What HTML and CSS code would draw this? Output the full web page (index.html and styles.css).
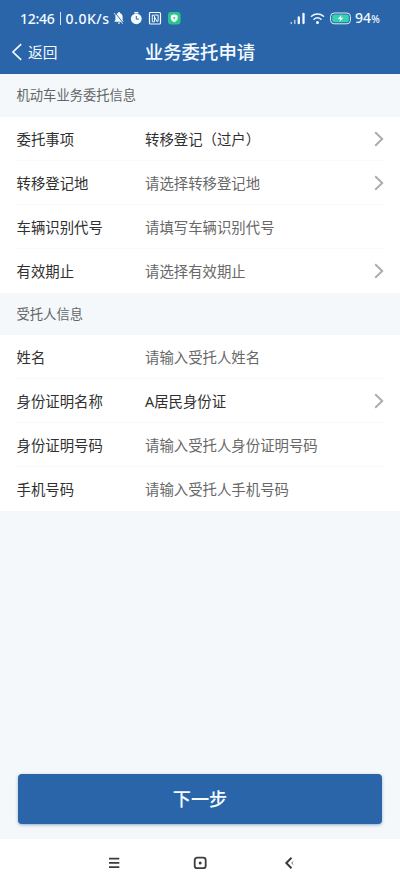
FILE: index.html
```html
<!DOCTYPE html>
<html lang="zh-CN">
<head>
<meta charset="utf-8">
<title>业务委托申请</title>
<link rel="stylesheet" href="styles.css">
</head>
<body>
<div class="app">
  <header class="header">
    <div class="status">
      <span class="clock">12:46<i class="bar"></i><span class="speed">0.0K/s</span></span>
      <svg class="st-left" width="68" height="16" viewBox="0 0 68 16" fill="none">
        <path d="M1.300 11.700h9.400L9.600 10V6.500C9.600 4.600 8.300 3.300 6.800 2.900V2H5.200v.9C3.700 3.300 2.400 4.600 2.400 6.500V10zM4.800 12.500h2.400a1.200 1.200 0 0 1-2.400 0z" fill="#f4fbff"/>
        <path d="M1.800 2.500l8.800 11" stroke="#2b65a9" stroke-width="1"/>
        <path d="M1 3l8.700 10.800" stroke="#f4fbff" stroke-width=".8"/>
        <circle cx="23.300" cy="8.800" r="5.400" fill="#f4fbff"/>
        <path d="M21.300 2.700h4" stroke="#f4fbff" stroke-width="1.500"/>
        <path d="M23.300 6v3.100h2.600" stroke="#2b65a9" stroke-width="1"/>
        <rect x="36.500" y="2.500" width="11" height="11.500" rx="1" stroke="#f4fbff" stroke-width="1.200"/>
        <path d="M39.300 11.800V5h1.400l3 6.200M41.500 5h3.600v6.300h-1.600M41.500 7v4.800h-2.200" stroke="#f4fbff" stroke-width="1"/>
        <rect x="55" y="2" width="12.500" height="12.500" rx="3" fill="#2bc58c"/>
        <path d="M61.200 4.300l3.400 1.200v2.800c0 1.800-1.300 3-3.400 4-2.100-1-3.400-2.200-3.400-4V5.500z" fill="#f4fff9"/>
        <path d="M61.200 6.800l1.200 1.100-1.200 1.400L60 7.900z" fill="#2bc58c"/>
      </svg>
      <svg class="st-right" width="64" height="16" viewBox="0 0 64 16" fill="none">
        <path d="M1.300 12.500v1M4.800 10.500v3" stroke="#c3daf0" stroke-width="1.300" stroke-linecap="round"/>
        <path d="M8.800 7.500v5.700M13.500 4v9" stroke="#f4fbff" stroke-width="2.300" stroke-linecap="round"/>
        <path d="M21.500 6.300a9 9 0 0 1 12 0M24 9.300a5.400 5.400 0 0 1 7 0" stroke="#f4fbff" stroke-width="1.500" stroke-linecap="round"/>
        <circle cx="27.500" cy="12.400" r="1.500" fill="#f4fbff"/>
        <rect x="40.600" y="3" width="19.800" height="10.800" rx="3.500" stroke="#d8f2f3" stroke-width="1"/>
        <rect x="42.200" y="4.600" width="16.600" height="7.600" rx="2" fill="#36d3b0"/>
        <path d="M51.500 5l-3.700 3.900h2.500l-.8 3 3.800-4.100h-2.500z" fill="#fff"/>
      </svg>
      <span class="level">94<small>%</small></span>
    </div>
    <div class="titlebar">
      <a class="back"><svg width="12" height="18" viewBox="0 0 12 18" fill="none"><path d="M10.200 1.200L2 9l8.200 7.800" stroke="#f4fbff" stroke-width="1.700"/></svg>返回</a>
      <h1>业务委托申请</h1>
    </div>
  </header>
  <main class="content">
    <h2 class="first">机动车业务委托信息</h2>
    <section class="list">
      <div class="row"><label>委托事项</label><span class="value">转移登记（过户）</span><svg class="arrow" viewBox="0 0 10 16"><path d="M1.200 1.200L8.200 8l-7 6.800"/></svg></div>
      <div class="row"><label>转移登记地</label><span class="hint">请选择转移登记地</span><svg class="arrow" viewBox="0 0 10 16"><path d="M1.200 1.200L8.200 8l-7 6.800"/></svg></div>
      <div class="row"><label>车辆识别代号</label><span class="hint">请填写车辆识别代号</span></div>
      <div class="row"><label>有效期止</label><span class="hint">请选择有效期止</span><svg class="arrow" viewBox="0 0 10 16"><path d="M1.200 1.200L8.200 8l-7 6.800"/></svg></div>
    </section>
    <h2>受托人信息</h2>
    <section class="list">
      <div class="row"><label>姓名</label><span class="hint">请输入受托人姓名</span></div>
      <div class="row"><label>身份证明名称</label><span class="value">A居民身份证</span><svg class="arrow" viewBox="0 0 10 16"><path d="M1.200 1.200L8.200 8l-7 6.800"/></svg></div>
      <div class="row"><label>身份证明号码</label><span class="hint">请输入受托人身份证明号码</span></div>
      <div class="row"><label>手机号码</label><span class="hint">请输入受托人手机号码</span></div>
    </section>
    <button class="next">下一步</button>
  </main>
  <nav class="nav">
    <svg width="190" height="16" viewBox="0 0 190 16" fill="none" stroke="#3c3c3c">
      <path d="M2 3.700h10.300M2 7.900h10.300M2 12.100h10.300" stroke-width="1.700"/>
      <rect x="87.700" y="2.700" width="11" height="10.500" rx="2.500" stroke-width="1.800"/>
      <circle cx="93.200" cy="8" r="1.500" fill="#3c3c3c" stroke="none"/>
      <path d="M184.500 2.700L179.300 8l5.200 5.300" stroke-width="2"/>
      <path d="M186.300 6.500L184.700 8l1.600 1.500" stroke-width="1" stroke="#777"/>
    </svg>
  </nav>
</div>
</body>
</html>
```

FILE: styles.css
```css
* { box-sizing: border-box; }
body {
  margin: 0;
  font-family: "Noto Sans", "Noto Sans CJK SC", sans-serif;
  background: #fff;
}
.app {
  width: 400px;
  height: 888px;
  display: flex;
  flex-direction: column;
  overflow: hidden;
}
.header {
  height: 74px;
  background: #2b65a9;
  color: #f4fbff;
  flex: none;
}
.status {
  height: 30px;
  padding: 7px 20px 0;
  display: flex;
  align-items: center;
  font: 500 14px/24px "Noto Sans", sans-serif;
}
.status svg { margin-bottom: 1px; }
.clock { width: 92px; white-space: nowrap; display: flex; align-items: center; letter-spacing: -.25px; }
.bar { width: 1px; height: 13px; background: #d5e6f5; margin: 0 5px 0 5px; }
.speed { letter-spacing: .5px; }
.st-left { margin-left: 1px; flex: none; }
.st-right { margin-left: 109px; flex: none; }
.level { margin-left: 1px; letter-spacing: .1px; }
.level small { font-size: 10px; }
.titlebar {
  height: 44px;
  display: grid;
  grid-template-columns: 100px 200px 100px;
  align-items: center;
}
.back {
  display: flex;
  align-items: center;
  gap: 5px;
  padding-left: 11px;
  font-size: 14.700px;
  line-height: 22px;
}
h1 {
  margin: 0;
  text-align: center;
  font-size: 18.400px;
  line-height: 26px;
  font-weight: 500;
}
.content {
  height: 765px;
  background: #f4f8fa;
  display: flex;
  flex-direction: column;
}
h2 {
  margin: 0;
  height: 42px;
  padding-left: 16.500px;
  font-size: 13.300px;
  line-height: 42px;
  font-weight: 400;
  color: #626668;
}
h2.first { height: 43px; line-height: 43px; }
.list { background: #fff; padding: 0 16px; }
.row {
  height: 44px;
  display: flex;
  align-items: center;
  padding-top: 2px;
  font-size: 14.400px;
  line-height: 22px;
  border-bottom: 1px solid #f9f9f9;
  white-space: nowrap;
}
.row:last-child { border-bottom-color: transparent; }
label { width: 129px; padding-left: .5px; color: #303030; }
.value { color: #303030; }
.hint { color: #686868; }
.arrow {
  width: 10px;
  height: 16px;
  margin-left: auto;
  margin-bottom: 2px;
  fill: none;
  stroke: #adadad;
  stroke-width: 2;
}
.next {
  margin: auto 18px 15px;
  height: 50px;
  padding: 0 0 2px;
  flex: none;
  border: 0;
  border-radius: 4px;
  background: #2b65a9;
  color: #f4fbff;
  font-family: inherit;
  font-size: 18.200px;
  font-weight: 500;
  box-shadow: 0 1px 3px rgba(43, 101, 169, .5);
}
.nav {
  height: 49px;
  padding: 16px 0 0 107px;
}
.nav svg { display: block; }
```
